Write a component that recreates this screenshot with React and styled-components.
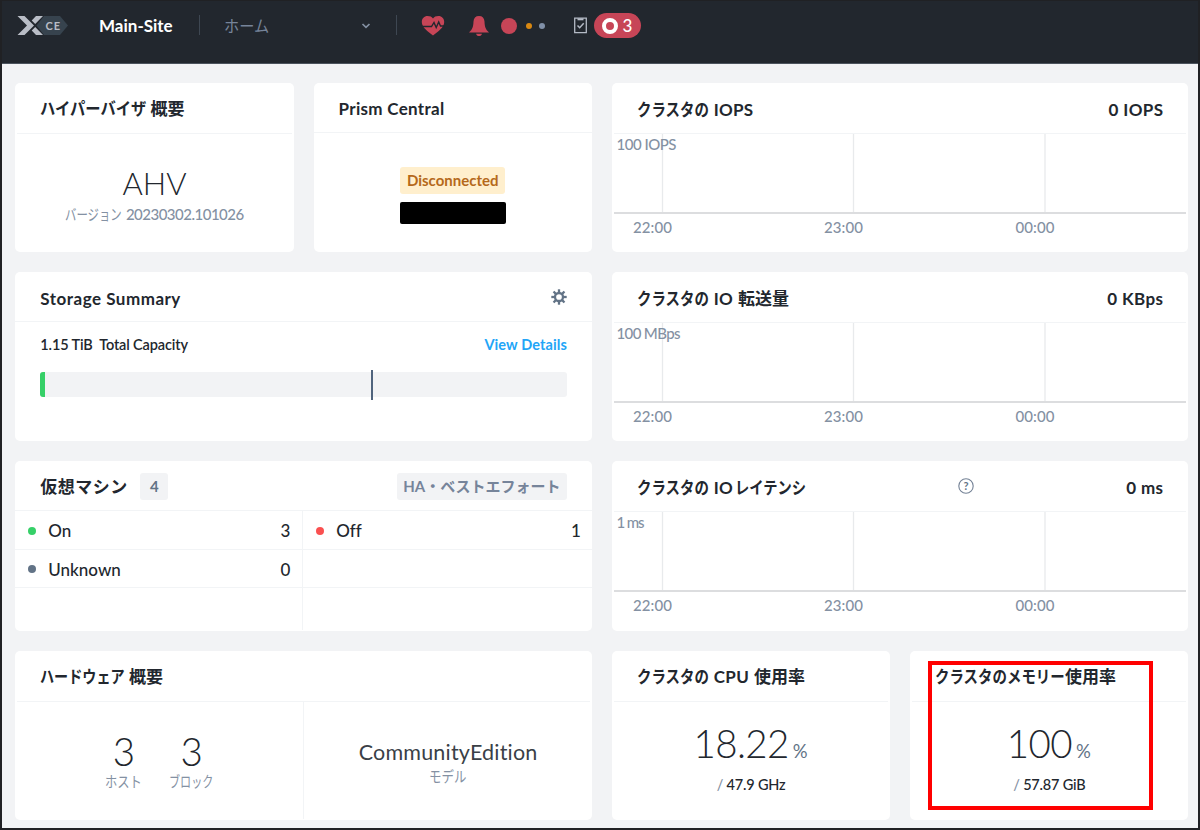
import React from 'react'
import styled, { createGlobalStyle } from 'styled-components'

const colors = {
  dark: '#22272e',
  slate: '#627386',
  muted: '#8491a3',
  page: '#f2f3f5',
  line: '#f2f4f6',
  red: '#c74557',
  green: '#36d068',
  blue: '#22a5f7'
}

const hours = [
  { x: 50.5, label: '22:00' },
  { x: 241.5, label: '23:00' },
  { x: 433, label: '00:00' }
]

const fonts = 'Lato, "Noto Sans CJK JP", sans-serif'

export default function App () {
  return (
    <>
      <GlobalStyle />
      <Frame>
        <NavBar />
        <Board>
          <Card>
            <Header $height={51} $inset><Title><Kana text='ハイパーバイザ' scale={0.9} /></Title><Title $gap={4}>概要</Title></Header>
            <Hypervisor>
              <Name>AHV</Name>
              <Caption><Kana text='バージョン' scale={0.76} /><Version>20230302.101026</Version></Caption>
            </Hypervisor>
          </Card>

          <Card>
            <Header $height={50}><Title $spacing={0.3}>Prism Central</Title></Header>
            <PrismBody>
              <Status>Disconnected</Status>
              <Redacted />
            </PrismBody>
          </Card>

          <ChartCard name='IOPS' value='0 IOPS' max='100 IOPS' maxWidth={60} />

          <Card $span={2}>
            <Header $height={50} $drop={2}><Title $spacing={0.5}>Storage Summary</Title><Push /><GearIcon /></Header>
            <StorageRow>
              <span>1.15 TiB&nbsp; Total Capacity</span>
              <Link>View Details</Link>
            </StorageRow>
            <StorageBar><Used /><Marker /></StorageBar>
          </Card>

          <ChartCard name='IO' rest='転送量' value='0 KBps' max='100 MBps' maxWidth={64} />

          <Card $span={2}>
            <Header $height={50}>
              <Title $spacing={0.5}>仮想マシン</Title>
              <Count>4</Count>
              <Push />
              <Badge>HA・ベストエフォート</Badge>
            </Header>
            <VmGrid>
              <VmCell><Dot $color={colors.green} />On<Push />3</VmCell>
              <VmCell><Dot $color='#fa5050' />Off<Push />1</VmCell>
              <VmCell><Dot $color={colors.slate} />Unknown<Push />0</VmCell>
              <VmCell />
              <VmCell />
              <VmCell />
            </VmGrid>
          </Card>

          <ChartCard name='IO' kana='レイテンシ' value='0 ms' max='1 ms' maxWidth={28} help />

          <Card $span={2}>
            <Header $height={51} $inset><Title><Kana text='ハードウェア' scale={0.83} /></Title><Title $gap={4}>概要</Title></Header>
            <Hardware>
              <Counts>
                <Stat><Big>3</Big><Caption><Kana text='ホスト' scale={0.82} /></Caption></Stat>
                <Stat><Big>3</Big><Caption><Kana text='ブロック' scale={0.74} /></Caption></Stat>
              </Counts>
              <Model>
                <ModelName>CommunityEdition</ModelName>
                <Caption><Kana text='モデル' scale={0.83} /></Caption>
              </Model>
            </Hardware>
          </Card>

          <Card>
            <Header $height={51} $inset>
              <Title><Kana text='クラスタの' scale={0.85} /></Title><Title $gap={5} $spacing={0.3}>CPU</Title><Title $gap={5}>使用率</Title>
            </Header>
            <Usage value='18.22' total='47.9 GHz' />
          </Card>

          <Card>
            <Header $height={51} $inset>
              <Title><Kana text='クラスタのメモリー' scale={0.85} /></Title><Title>使用率</Title>
            </Header>
            <Usage value='100' total='57.87 GiB' />
            <Highlight />
          </Card>
        </Board>
      </Frame>
    </>
  )
}

// Narrow kana next to full width kanji, as in a UI font
function Kana ({ text, scale }) {
  return <Narrow $scale={scale} $count={text.length}>{text}</Narrow>
}

function NavBar () {
  return (
    <Nav>
      <Logo />
      <Site>Main-Site</Site>
      <Divider />
      <Menu>
        <Kana text='ホーム' scale={0.95} />
        <svg width='10' height='8' viewBox='0 0 10 8' fill='none' stroke='#8491a3' strokeWidth='1.7'>
          <path d='M1.5 2 5 5.3 8.5 2' />
        </svg>
      </Menu>
      <Divider />
      <Icons>
        <HeartIcon />
        <BellIcon />
        <Circle $size={16} $color={colors.red} />
        <Circle $size={6} $color='#d98812' />
        <Circle $size={6} $color='#8090a8' />
        <TaskIcon />
        <Tasks><Ring />3</Tasks>
      </Icons>
    </Nav>
  )
}

function ChartCard ({ name, rest, kana, value, max, maxWidth, help }) {
  return (
    <Card $span={2}>
      <Header $height={51} $inset $drop={1}>
        <Title><Kana text='クラスタの' scale={0.85} /></Title>
        <Title $gap={5} $spacing={0.2}>{name}</Title>
        {rest && <Title $gap={5}>{rest}</Title>}
        {kana && <Title $gap={2}><Kana text={kana} scale={0.84} /></Title>}
        <Push />
        {help && <HelpIcon />}
        <Title $spacing={0.4}>{value}</Title>
      </Header>
      <Chart width='576' height='117' viewBox='0 0 576 117'>
        {hours.map(({ x, label }) => (
          <g key={label}>
            <path d={`M${x} 0V78`} stroke='#e8eaec' strokeWidth='1.3' />
            <text x={x - 29.5} y='98.500' textLength='39'>{label}</text>
          </g>
        ))}
        <path d='M2 79H574' stroke='#dcdddf' strokeWidth='2' />
        <text x='4.500' y='16' textLength={maxWidth}>{max}</text>
      </Chart>
    </Card>
  )
}

function Usage ({ value, total }) {
  return (
    <UsageBody>
      <Percent><Big>{value}</Big><small>%</small></Percent>
      <Total><i>/</i> {total}</Total>
    </UsageBody>
  )
}

function Logo () {
  return (
    <LogoSvg width='54' height='22' viewBox='0 0 54 22'>
      <path d='M28 1H44L52 10.500 44 20H28L20.500 10.500Z' fill='#37434e' />
      <path d='M1.500 1H8.500L18 10.500 8.500 20H1.500L11 10.500Z' fill='#b9bdc6' />
      <path d='M27 1H20L15.700 5.400 19.200 8.900ZM27 20H20L15.700 15.600 19.200 12.100Z' fill='#b9bdc6' />
      <text x='29.500' y='14.500' textLength='14.500'>CE</text>
    </LogoSvg>
  )
}

function HeartIcon () {
  return (
    <svg width='24' height='22' viewBox='0 0 24 22'>
      <path d='M12 20.500C7 16.500 .8 12.500 .8 7 .8 3.500 3.300 1 6.500 1 9 1 11 1.800 12 3.500 13 1.800 15 1 17.500 1 20.700 1 23.200 3.500 23.200 7 23.200 12.500 17 16.500 12 20.500Z' fill={colors.red} />
      <path d='M0 11.500H10.500L13 7.500 15.200 12.500 17.700 7 19.500 11H24' fill='none' stroke={colors.dark} strokeWidth='1.400' />
    </svg>
  )
}

function BellIcon () {
  return (
    <BellSvg width='20' height='22' viewBox='0 0 20 22' fill={colors.red}>
      <path d='M10 1C13.500 1 15.300 3 15.500 6.500 15.700 11.500 16.500 14.500 20 17.500H0C3.500 14.500 4.300 11.500 4.500 6.500 4.700 3 6.500 1 10 1Z' />
      <path d='M7 18.700H13C12.500 20.300 11.500 21 10 21S7.500 20.300 7 18.700Z' />
    </BellSvg>
  )
}

function TaskIcon () {
  return (
    <TaskSvg width='13' height='17' viewBox='0 0 13 17' fill='none' stroke='#b4bac5' strokeWidth='1.300'>
      <path d='M.7 1.200H12.300V15.700H.7Z' />
      <path d='M3.500 2.300H9.500' strokeWidth='2' />
      <path d='M3.500 8.500 5.700 10.700 9.700 6.300' strokeWidth='1.500' />
    </TaskSvg>
  )
}

function GearIcon () {
  return (
    <GearSvg width='16' height='16' viewBox='-8 -8 16 16' fill='none' stroke={colors.slate}>
      <circle r='4' strokeWidth='2.300' />
      {[0, 45, 90, 135, 180, 225, 270, 315].map(angle => (
        <path key={angle} d='M0 -4.500V-7.700' strokeWidth='2.300' transform={`rotate(${angle})`} />
      ))}
    </GearSvg>
  )
}

function HelpIcon () {
  return (
    <HelpSvg width='16' height='16' viewBox='0 0 16 16'>
      <circle cx='8' cy='8' r='7.200' fill='none' stroke='#748296' strokeWidth='1.100' />
      <text x='8' y='12' textAnchor='middle'>?</text>
    </HelpSvg>
  )
}

const GlobalStyle = createGlobalStyle`
  * { box-sizing: border-box; }
  body {
    margin: 0;
    font-family: ${fonts};
    font-variant-ligatures: none;
    color: ${colors.dark};
  }
`

const Frame = styled.div`
  width: 1200px;
  height: 830px;
  border: solid #202124;
  border-width: 1px 2px 2px;
  background: ${colors.page};
  overflow: hidden;
`

const Nav = styled.nav`
  display: flex;
  height: 63px;
  padding: 0 14px;
  background: ${colors.dark};
  border-bottom: 1px solid #4b535d;
  > * { flex-shrink: 0; }
`

const LogoSvg = styled.svg`
  margin-top: 14px;
  text {
    font: 700 11px ${fonts};
    fill: #b9bdc6;
  }
`

const Site = styled.div`
  width: 99.5px;
  margin-left: 29px;
  font-size: 17px;
  font-weight: 700;
  line-height: 49px;
  color: #fff;
`

const Divider = styled.div`
  width: 1px;
  height: 20px;
  margin-top: 14px;
  background: #3e4752;
`

const Menu = styled.div`
  display: flex;
  align-items: center;
  justify-content: space-between;
  width: 196px;
  height: 49px;
  padding: 0 25px 0 24px;
  font-size: 16px;
  line-height: 20px;
  color: #76849a;
`

const Icons = styled.div`
  display: flex;
  align-items: center;
  height: 49px;
  padding-left: 24px;
`

const BellSvg = styled.svg`
  margin: 0 13px 0 24.5px;
`

const TaskSvg = styled.svg`
  margin: 0 7px 0 22px;
`

const Circle = styled.span`
  width: ${p => p.$size}px;
  height: ${p => p.$size}px;
  margin-right: ${p => p.$size > 6 ? 9 : 7}px;
  border-radius: 50%;
  background: ${p => p.$color};
  &:first-of-type { margin-left: -1px; }
`

const Tasks = styled.div`
  display: flex;
  align-items: center;
  gap: 5px;
  width: 47px;
  height: 25px;
  margin-left: -0.5px;
  padding-left: 8px;
  border-radius: 13px;
  background: ${colors.red};
  color: #fff;
  font-size: 17px;
  font-weight: 500;
  line-height: 24px;
`

const Ring = styled.span`
  width: 16px;
  height: 16px;
  border: 4px solid #fff;
  border-radius: 50%;
`

const Board = styled.main`
  display: grid;
  grid-template-columns: repeat(4, 278.3px);
  grid-auto-rows: 169.2px;
  gap: 20px;
  padding: 19px 0 0 13.3px;
`

const Card = styled.section`
  position: relative;
  grid-column: span ${p => p.$span || 1};
  min-width: 0;
  border-radius: 5px;
  background: #fff;
`

const Header = styled.header`
  display: flex;
  align-items: center;
  height: ${p => p.$height}px;
  margin: 0 ${p => p.$inset ? 2 : 0}px;
  padding: ${p => 2 + (p.$drop || 0)}px ${p => p.$inset ? 23 : 25}px 0;
  border-bottom: 1px solid ${colors.line};
`

const Title = styled.span`
  margin-left: ${p => p.$gap || 0}px;
  font-size: 17px;
  font-weight: 700;
  line-height: 24px;
  letter-spacing: ${p => p.$spacing || 0}px;
  white-space: nowrap;
`

const Push = styled.span`
  flex: 1;
`

const Narrow = styled.span`
  display: inline-block;
  margin-right: ${p => -p.$count * (1 - p.$scale)}em;
  transform: scaleX(${p => p.$scale});
  transform-origin: left;
  white-space: nowrap;
`

const Version = styled.span`
  margin-left: 4px;
  letter-spacing: -0.5px;
`

const Caption = styled.div`
  font-size: 15px;
  font-weight: 500;
  line-height: 20px;
  color: ${colors.muted};
  white-space: nowrap;
  ${Narrow} { font-weight: 400; }
`

const Hypervisor = styled.div`
  padding-top: 29px;
  text-align: center;
`

const Name = styled.div`
  height: 41px;
  font-size: 31px;
  font-weight: 300;
  line-height: 40px;
`

const PrismBody = styled.div`
  display: flex;
  flex-direction: column;
  align-items: center;
  gap: 8px;
  padding-top: 34px;
`

const Status = styled.span`
  width: 105px;
  height: 27px;
  border-radius: 3px;
  background: #ffefcd;
  color: #b5691b;
  font-size: 15px;
  font-weight: 700;
  line-height: 27px;
  text-align: center;
`

const Redacted = styled.span`
  width: 106px;
  height: 22px;
  border-radius: 2px;
  background: #000;
`

const Chart = styled.svg`
  display: block;
  text {
    font: 500 15px ${fonts};
    fill: ${colors.muted};
  }
`

const GearSvg = styled.svg`
  margin-bottom: 3px;
`

const HelpSvg = styled.svg`
  margin: 0 152px 3px 0;
  text {
    font: 700 11px ${fonts};
    fill: ${colors.slate};
  }
`

const StorageRow = styled.div`
  display: flex;
  justify-content: space-between;
  padding: 13px 25px 0;
  font-size: 14.5px;
  font-weight: 600;
  line-height: 20px;
  letter-spacing: -0.13px;
`

const Link = styled.a`
  color: ${colors.blue};
  font-weight: 700;
  letter-spacing: 0.1px;
`

const StorageBar = styled.div`
  display: flex;
  align-items: center;
  height: 25px;
  margin: 17px 25px 0;
  border-radius: 3px;
  background: ${colors.page};
`

const Used = styled.span`
  width: 5px;
  height: 25px;
  border-radius: 3px 0 0 3px;
  background: ${colors.green};
`

const Marker = styled.span`
  width: 2px;
  height: 30px;
  margin-left: 326px;
  background: #50647d;
`

const Count = styled.span`
  width: 28px;
  height: 27px;
  margin-left: 12.5px;
  border-radius: 3px;
  background: ${colors.page};
  color: ${colors.slate};
  font-size: 15px;
  font-weight: 700;
  line-height: 27px;
  text-align: center;
`

const Badge = styled(Count)`
  width: 170px;
  color: #76849a;
  white-space: nowrap;
`

const VmGrid = styled.div`
  display: grid;
  grid-template-columns: 288px 1fr;
  grid-template-rows: 39px 38px 42px;
`

const VmCell = styled.div`
  display: flex;
  align-items: center;
  padding: 1px 11px 0 13px;
  font-size: 17px;
  font-weight: 500;
  &:nth-child(odd) {
    padding-right: 12px;
    border-right: 1px solid ${colors.line};
  }
  &:nth-child(-n + 4) { border-bottom: 1px solid ${colors.line}; }
`

const Dot = styled.span`
  width: 8px;
  height: 8px;
  margin-right: 12px;
  border-radius: 50%;
  background: ${p => p.$color};
`

const Hardware = styled.div`
  display: grid;
  grid-template-columns: 289px 1fr;
  height: 117px;
`

const Counts = styled.div`
  display: flex;
  justify-content: center;
  gap: 27px;
  padding-top: 29px;
  border-right: 1px solid ${colors.line};
`

const Stat = styled.div`
  text-align: center;
`

const Big = styled.div`
  font-size: 38.5px;
  font-weight: 300;
  line-height: 40px;
  letter-spacing: -0.6px;
`

const Model = styled.div`
  padding-top: 35px;
  text-align: center;
`

const ModelName = styled.div`
  height: 29px;
  font-size: 21.5px;
  line-height: 30px;
  letter-spacing: 0.2px;
  color: #3a3f47;
`

const UsageBody = styled.div`
  padding-top: 21px;
  text-align: center;
`

const Percent = styled.div`
  display: flex;
  align-items: baseline;
  justify-content: center;
  gap: 4px;
  padding-right: 1px;
  small {
    font-size: 18.5px;
    color: ${colors.slate};
  }
`

const Total = styled.div`
  margin-top: 12px;
  font-size: 14.5px;
  font-weight: 500;
  line-height: 20px;
  letter-spacing: -0.2px;
  i { color: ${colors.muted}; font-style: normal; }
`

const Highlight = styled.div`
  position: absolute;
  left: 18px;
  top: 10px;
  width: 225px;
  height: 149px;
  border: 4px solid #f00;
`
